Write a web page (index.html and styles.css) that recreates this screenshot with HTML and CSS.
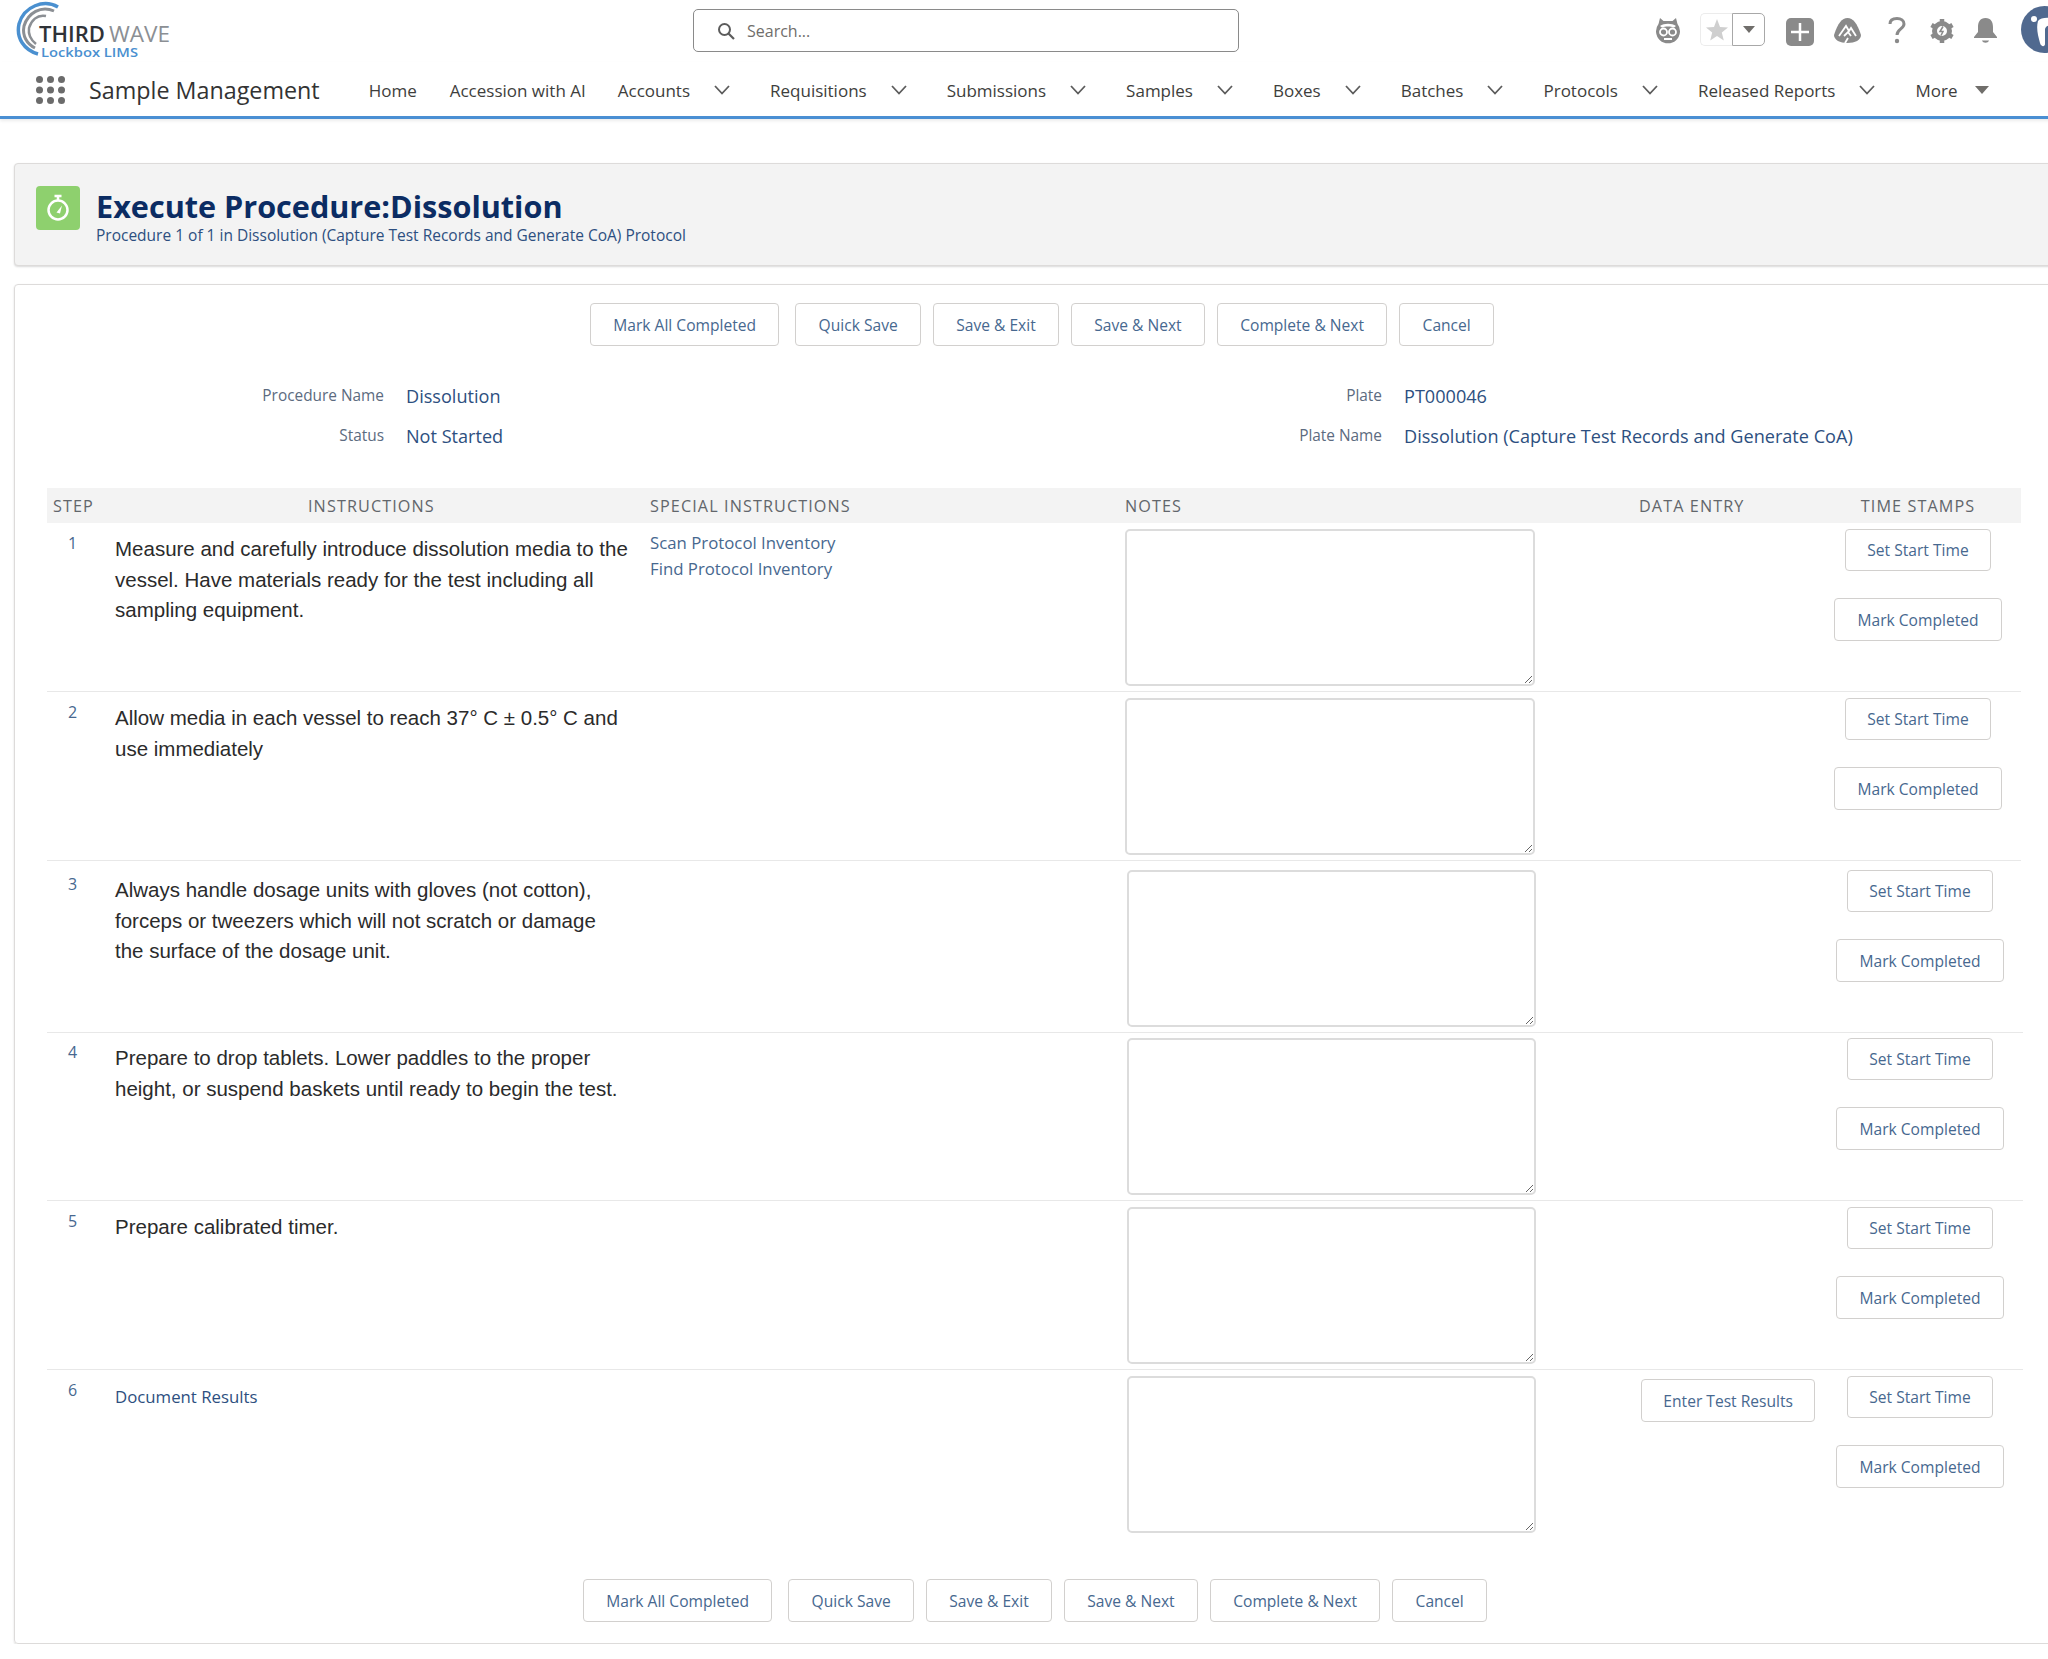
FILE: index.html
```html
<!DOCTYPE html>
<html lang="en">
<head>
    <meta charset="UTF-8">
    <title>Execute Procedure:Dissolution</title>
    <link rel="stylesheet" href="styles.css">
</head>
<body>
<div class="page">
    <header class="topbar">
        <!-- logo: arcs plus real text -->
        <svg class="logo" width="156" height="62" viewBox="0 0 156 62">
            <path d="M44 7 C30 -1 10 6 5 24 C2 38 10 50 24 54" fill="none" stroke="#4a90d0" stroke-width="3.500"/>
            <path d="M40 11 C27 5 14 13 10 26 C8 36 13 44 21 48" fill="none" stroke="#8b8f94" stroke-width="3"/>
            <path d="M32 16 C23 14 17 21 15 28 C14 35 17 40 22 44" fill="none" stroke="#8b8f94" stroke-width="2.500"/>
            <text class="logo-dark" x="25" y="42" textLength="66" lengthAdjust="spacingAndGlyphs">THIRD</text>
            <text class="logo-light" x="95" y="42" textLength="61" lengthAdjust="spacingAndGlyphs">WAVE</text>
            <text class="logo-blue" x="27" y="57" textLength="97" lengthAdjust="spacingAndGlyphs">Lockbox LIMS</text>
        </svg>
        <div class="search">
            <svg width="20" height="20" viewBox="0 0 20 20"><circle cx="8.5" cy="8.5" r="5.5" fill="none" stroke="#5c5c5c" stroke-width="2"/><path d="M12.5 12.5 L18 18" stroke="#5c5c5c" stroke-width="2.2"/></svg>
            <span>Search...</span>
        </div>
        <div class="tools">
            <svg class="tool-mascot" width="26" height="26" viewBox="0 0 26 26">
                <path d="M5 0 L8.500 3 H17.500 L21 0 L22.500 6 A12 12 0 1 1 3.500 6 Z" fill="#8a8a8a"/>
                <path d="M5 8 C9 5 17 5 21 8 L19 9.500 C16 8 10 8 7 9.500 Z" fill="#fff"/>
                <circle cx="8.500" cy="14" r="3.500" fill="none" stroke="#fff" stroke-width="1.800"/>
                <circle cx="17.500" cy="14" r="3.500" fill="none" stroke="#fff" stroke-width="1.800"/>
                <path d="M9 21 H17" stroke="#fff" stroke-width="2"/>
            </svg>
            <div class="fav">
                <span class="fav-star"><svg width="24" height="24" viewBox="0 0 24 24"><path d="M12 1 L15 9 L23 9.600 L16.800 14.500 L18.800 22.500 L12 18 L5.200 22.500 L7.200 14.500 L1 9.600 L9 9 Z" fill="#cfcfcf"/></svg></span>
                <span class="fav-more"><i class="caret"></i></span>
            </div>
            <svg class="tool-plus" width="28" height="28" viewBox="0 0 28 28"><rect width="28" height="28" rx="5" fill="#8a8a8a"/><path d="M14 5 V23 M5 14 H23" stroke="#fff" stroke-width="2.500"/></svg>
            <svg class="tool-trail" width="27" height="26" viewBox="0 0 27 26">
                <path d="M13.500 0 C19 0 23 5 27 17 C27 22 21 25 13.500 25 C6 25 0 22 0 17 C4 5 8 0 13.500 0 Z" fill="#8a8a8a"/>
                <path d="M5 18 L12 8 L15 13 L17 10 L22 18 M10 18 L14 14 L17 18 M11 25 L14 20" fill="none" stroke="#fff" stroke-width="1.800"/>
            </svg>
            <svg class="tool-help" width="18" height="27" viewBox="0 0 18 27"><path d="M2 7 C2 3 5 1.500 9 1.500 C13 1.500 16 3.500 16 7 C16 12 9 12 9 18" fill="none" stroke="#8a8a8a" stroke-width="3"/><circle cx="9" cy="24" r="2.200" fill="#8a8a8a"/></svg>
            <svg class="tool-gear" width="24" height="26" viewBox="0 0 24 26">
                <circle cx="12" cy="13" r="7.500" fill="none" stroke="#8a8a8a" stroke-width="5"/>
                <path d="M12 1 V5 M12 21 V25 M1.500 7 L5 9 M19 17 L22.500 19 M1.500 19 L5 17 M19 9 L22.500 7" stroke="#8a8a8a" stroke-width="4.500"/>
                <path d="M13 8.500 L10 13.500 H13 L11 17.500" fill="none" stroke="#8a8a8a" stroke-width="1.500"/>
            </svg>
            <svg class="tool-bell" width="25" height="27" viewBox="0 0 25 27"><path d="M12.500 1 C18 1 20 5 20 10 V15 L24 20 V21 H1 V20 L5 15 V10 C5 5 7 1 12.500 1 Z" fill="#8a8a8a"/><path d="M9 23.500 H16 C15 26.500 10 26.500 9 23.500 Z" fill="#8a8a8a"/></svg>
            <svg class="avatar" width="47" height="47" viewBox="0 0 47 47">
                <circle cx="23.500" cy="23.500" r="23.500" fill="#50698f"/>
                <path d="M17 15 C20 11 30 11 37 14 L37 20 C30 18 25 19 24 23 V38 C24 41 20 41 19 37 C17 30 15 22 17 15 Z" fill="#fff"/>
                <circle cx="13" cy="13" r="3" fill="#fff"/>
            </svg>
        </div>
    </header>

    <nav class="appnav">
        <svg class="waffle" width="29" height="28" viewBox="0 0 29 28" fill="#6b6b6b">
            <circle cx="3.500" cy="3.500" r="3.500"/><circle cx="14.500" cy="3.500" r="3.500"/><circle cx="25.500" cy="3.500" r="3.500"/>
            <circle cx="3.500" cy="14" r="3.500"/><circle cx="14.500" cy="14" r="3.500"/><circle cx="25.500" cy="14" r="3.500"/>
            <circle cx="3.500" cy="24.500" r="3.500"/><circle cx="14.500" cy="24.500" r="3.500"/><circle cx="25.500" cy="24.500" r="3.500"/>
        </svg>
        <span class="appname">Sample Management</span>
        <ul class="navlist">
            <li class="navitem">Home</li>
            <li class="navitem">Accession with AI</li>
            <li class="navitem">Accounts<svg class="chev" viewBox="0 0 16 10"><path d="M1 1 L8 8.500 L15 1" fill="none" stroke="#5c5c5c" stroke-width="1.800"/></svg></li>
            <li class="navitem">Requisitions<svg class="chev" viewBox="0 0 16 10"><path d="M1 1 L8 8.500 L15 1" fill="none" stroke="#5c5c5c" stroke-width="1.800"/></svg></li>
            <li class="navitem">Submissions<svg class="chev" viewBox="0 0 16 10"><path d="M1 1 L8 8.500 L15 1" fill="none" stroke="#5c5c5c" stroke-width="1.800"/></svg></li>
            <li class="navitem">Samples<svg class="chev" viewBox="0 0 16 10"><path d="M1 1 L8 8.500 L15 1" fill="none" stroke="#5c5c5c" stroke-width="1.800"/></svg></li>
            <li class="navitem">Boxes<svg class="chev" viewBox="0 0 16 10"><path d="M1 1 L8 8.500 L15 1" fill="none" stroke="#5c5c5c" stroke-width="1.800"/></svg></li>
            <li class="navitem">Batches<svg class="chev" viewBox="0 0 16 10"><path d="M1 1 L8 8.500 L15 1" fill="none" stroke="#5c5c5c" stroke-width="1.800"/></svg></li>
            <li class="navitem">Protocols<svg class="chev" viewBox="0 0 16 10"><path d="M1 1 L8 8.500 L15 1" fill="none" stroke="#5c5c5c" stroke-width="1.800"/></svg></li>
            <li class="navitem">Released Reports<svg class="chev" viewBox="0 0 16 10"><path d="M1 1 L8 8.500 L15 1" fill="none" stroke="#5c5c5c" stroke-width="1.800"/></svg></li>
            <li class="navitem">More<i class="caret caret-more"></i></li>
        </ul>
    </nav>

    <section class="pagehead">
        <span class="pagehead-icon">
            <svg width="26" height="30" viewBox="0 0 26 30"><circle cx="13" cy="17" r="9.500" fill="none" stroke="#fff" stroke-width="2.500"/><path d="M13 3 V7 M9.500 3 H16.500" stroke="#fff" stroke-width="2.500"/><path d="M11.500 19.500 L17 12.500 L15 20.500 Z" fill="#fff"/></svg>
        </span>
        <div>
            <h1 class="pagehead-title">Execute Procedure:Dissolution</h1>
            <p class="pagehead-sub">Procedure 1 of 1 in Dissolution (Capture Test Records and Generate CoA) Protocol</p>
        </div>
    </section>

    <main class="card">
        <div class="toolbar toolbar-top">
            <button class="btn">Mark All Completed</button>
            <button class="btn">Quick Save</button>
            <button class="btn">Save &amp; Exit</button>
            <button class="btn">Save &amp; Next</button>
            <button class="btn">Complete &amp; Next</button>
            <button class="btn">Cancel</button>
        </div>

        <dl class="meta">
            <dt>Procedure Name</dt><dd>Dissolution</dd>
            <dt>Plate</dt><dd>PT000046</dd>
            <dt>Status</dt><dd>Not Started</dd>
            <dt>Plate Name</dt><dd>Dissolution (Capture Test Records and Generate CoA)</dd>
        </dl>

        <div class="steps">
            <div class="steps-head">
                <span class="th-step">Step</span>
                <span class="th-instr">Instructions</span>
                <span>Special Instructions</span>
                <span>Notes</span>
                <span class="th-data">Data Entry</span>
                <span class="th-time">Time Stamps</span>
            </div>

            <div class="row">
                <span class="step-no">1</span>
                <div class="instr">Measure and carefully introduce dissolution media to the vessel. Have materials ready for the test including all sampling equipment.</div>
                <div class="special"><a>Scan Protocol Inventory</a><a>Find Protocol Inventory</a></div>
                <textarea class="notes"></textarea>
                <div class="data"></div>
                <div class="times"><button class="btn">Set Start Time</button><button class="btn">Mark Completed</button></div>
            </div>

            <div class="row">
                <span class="step-no">2</span>
                <div class="instr">Allow media in each vessel to reach 37° C ± 0.5° C and use immediately</div>
                <div class="special"></div>
                <textarea class="notes"></textarea>
                <div class="data"></div>
                <div class="times"><button class="btn">Set Start Time</button><button class="btn">Mark Completed</button></div>
            </div>

            <div class="row row-late row-9">
                <span class="step-no">3</span>
                <div class="instr">Always handle dosage units with gloves (not cotton), forceps or tweezers which will not scratch or damage the surface of the dosage unit.</div>
                <div class="special"></div>
                <textarea class="notes"></textarea>
                <div class="data"></div>
                <div class="times"><button class="btn">Set Start Time</button><button class="btn">Mark Completed</button></div>
            </div>

            <div class="row row-late row-5">
                <span class="step-no">4</span>
                <div class="instr">Prepare to drop tablets. Lower paddles to the proper height, or suspend baskets until ready to begin the test.</div>
                <div class="special"></div>
                <textarea class="notes"></textarea>
                <div class="data"></div>
                <div class="times"><button class="btn">Set Start Time</button><button class="btn">Mark Completed</button></div>
            </div>

            <div class="row row-late">
                <span class="step-no">5</span>
                <div class="instr">Prepare calibrated timer.</div>
                <div class="special"></div>
                <textarea class="notes"></textarea>
                <div class="data"></div>
                <div class="times"><button class="btn">Set Start Time</button><button class="btn">Mark Completed</button></div>
            </div>

            <div class="row row-late row-last">
                <span class="step-no">6</span>
                <div class="instr"><a class="doclink">Document Results</a></div>
                <div class="special"></div>
                <textarea class="notes"></textarea>
                <div class="data"><button class="btn">Enter Test Results</button></div>
                <div class="times"><button class="btn">Set Start Time</button><button class="btn">Mark Completed</button></div>
            </div>
        </div>

        <div class="toolbar toolbar-bottom">
            <button class="btn">Mark All Completed</button>
            <button class="btn">Quick Save</button>
            <button class="btn">Save &amp; Exit</button>
            <button class="btn">Save &amp; Next</button>
            <button class="btn">Complete &amp; Next</button>
            <button class="btn">Cancel</button>
        </div>
    </main>
</div>
</body>
</html>
```

FILE: styles.css
```css
html, body {margin: 0; padding: 0; overflow: hidden; background: #fff;}
body {font-family: "Open Sans", "Liberation Sans", sans-serif; font-size: 17px; color: #3e3e3c;}
.page {width: 2068px;}

/* top bar */
.topbar {display: flex; align-items: flex-start; height: 62px;}
.logo {margin-left: 14px; flex: none;}
.logo text {font-family: "Open Sans", sans-serif;}
.logo-dark {font-size: 21px; font-weight: 600; fill: #2f3237;}
.logo-light {font-size: 21px; fill: #8b8f94;}
.logo-blue {font-size: 13px; font-weight: 600; fill: #4a90d0;}
.search {display: flex; align-items: center; gap: 11px; box-sizing: border-box; width: 546px; height: 43px; margin: 9px 0 0 523px; padding-left: 22px; border: 1px solid #8a8a8a; border-radius: 5px; color: #706e6b; font-size: 16px;}
.tools {display: flex; align-items: center; margin: 0 0 0 auto; height: 59px;}
.tools svg {flex: none;}
.fav {display: flex; height: 33px; margin-left: 19px;}
.fav-star {display: flex; align-items: center; justify-content: center; box-sizing: border-box; width: 32px; border: 1px solid #ececec; border-right: 0; border-radius: 5px 0 0 5px;}
.fav-more {display: flex; align-items: center; justify-content: center; box-sizing: border-box; width: 33px; border: 1px solid #a8a8a8; border-radius: 0 5px 5px 0;}
.caret {display: block; width: 0; height: 0; border-left: 6px solid transparent; border-right: 6px solid transparent; border-top: 7px solid #706e6b;}
.tool-mascot {margin-top: 2px;}
.tool-plus {margin-left: 21px; margin-top: 4px;}
.tool-trail {margin-left: 20px; margin-top: 2px;}
.tool-help {margin-left: 27px; margin-top: 2px;}
.tool-gear {margin-left: 24px; margin-top: 2px;}
.tool-bell {margin-left: 19px; margin-top: 2px;}
.avatar {margin-left: 23px; margin-top: 0;}

/* app nav */
.appnav {display: flex; align-items: center; height: 57px; box-sizing: border-box; padding: 2px 0 0 36px; border-bottom: 3px solid #4a8fd3; box-shadow: 0 2px 3px rgba(0, 0, 0, 0.08);}
.appname {margin-left: 24px; font-size: 23.300px; color: #333;}
.navlist {display: flex; list-style: none; margin: 0 0 0 49px; padding: 0;}
.navitem {display: flex; align-items: center; margin-right: 32px; white-space: nowrap;}
.navitem:first-child {margin-right: 33px;}
.chev {width: 16px; height: 10px; margin-left: 24px; margin-right: 8px;}
.caret-more {margin-left: 18px; border-left-width: 7px; border-right-width: 7px; border-top-width: 8px; margin-top: -1px;}

/* page heading */
.pagehead {display: flex; align-items: flex-start; gap: 16px; box-sizing: border-box; height: 103px; margin: 44px 0 0 14px; padding: 22px 0 0 21px; background: #f3f3f3; border: 1px solid #dddbda; border-radius: 4px; box-shadow: 0 1px 2px rgba(0, 0, 0, 0.15);}
.pagehead-icon {display: flex; align-items: center; justify-content: center; flex: none; width: 44px; height: 44px; background: #8ed06e; border-radius: 4px;}
.pagehead-title {margin: -1px 0 0; font-size: 30.600px; line-height: 42px; font-weight: 700; color: #0b2c63;}
.pagehead-sub {margin: -3px 0 0; font-size: 15.500px; line-height: 22px; color: #2d4f80;}

/* main card */
.card {box-sizing: border-box; height: 1360px; margin: 18px 0 0 14px; padding-top: 18px; border: 1px solid #dddbda; border-radius: 4px; box-shadow: 0 1px 2px rgba(0, 0, 0, 0.15);}
.btn {box-sizing: border-box; height: 43px; padding: 0 22px; font-family: inherit; font-size: 15.600px; color: #47688f; background: #fff; border: 1px solid #d2d0ce; border-radius: 4px; white-space: nowrap;}
.toolbar {display: flex; gap: 12px;}
.toolbar .btn {padding: 0 22.250px;}
.toolbar .btn:first-child {margin-right: 4px;}
.toolbar-top {padding-left: 575px;}
.toolbar-bottom {padding-left: 568px; margin-top: 41px;}

.meta {display: grid; grid-template-columns: 369px 576px 378px auto; column-gap: 22px; margin: 30px 0 32px; line-height: 40px;}
.meta dt {text-align: right; font-size: 15.400px; color: #5c6b80;}
.meta dd {margin: 0; font-size: 18.100px; color: #2d4f80;}

/* step table */
.steps {width: 1974px; margin-left: 32px;}
.steps-head, .row {display: grid; grid-template-columns: 68px 535px 475px 410px 280px 206px;}
.steps-head {height: 35px; align-items: center; background: #f3f3f3; font-size: 16.200px; letter-spacing: 1.100px; text-transform: uppercase; color: #62666b;}
.th-step {padding-left: 6px;}
.th-instr {padding-left: 193px;}
.th-data {padding-left: 104px;}
.th-time {text-align: center;}
.row {padding: 6px 0 5px; border-bottom: 1px solid #e8e8e8;}
.row-5 {padding-top: 5px;}
.row-9 {padding-top: 9px;}
.row-late {width: 1976px; grid-template-columns: 68px 535px 477px 409px 281px 206px;}
.row-last {border-bottom: 0;}
.step-no {padding-left: 21px; line-height: 28px; font-size: 16px; color: #47688f;}
.instr {padding-top: 5px; padding-right: 21px; font-family: "Liberation Sans", sans-serif; font-size: 20.500px; line-height: 30.500px; color: #2b2b2b;}
.doclink {font-family: "Open Sans", sans-serif; font-size: 16.800px; color: #2d4f80;}
.special {display: flex; flex-direction: column; align-items: flex-start; font-size: 16.800px; line-height: 26px; padding-top: 1px; color: #47688f;}
.notes {box-sizing: border-box; display: block; width: 100%; height: 157px; margin: 0; padding: 6px; border: 2px solid #dcdcdc; border-radius: 5px; background: #fff;}
.data {display: flex; justify-content: flex-end; align-items: flex-start; padding: 3px 2px 0 0;}
.data .btn {padding: 0 21px;}
.times {display: flex; flex-direction: column; align-items: center; gap: 27px;}
.times .btn:first-child {height: 42px; padding: 0 21px;}
```
